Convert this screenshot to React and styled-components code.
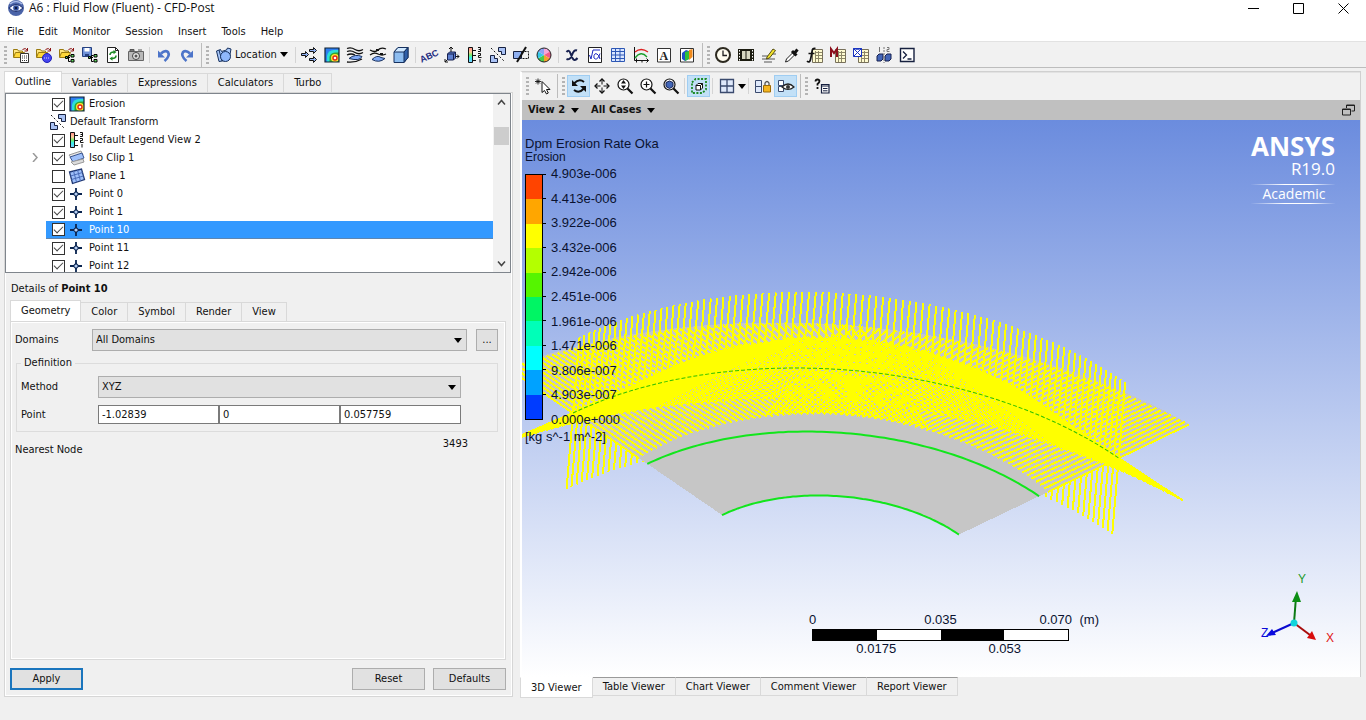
import React, { useState } from 'react';
import styled, { createGlobalStyle, css } from 'styled-components';

const GlobalStyle = createGlobalStyle`
  * {
    box-sizing: border-box;
  }
  body {
    margin: 0;
    background: #f0f0f0;
    color: #111;
    font-family: "DejaVu Sans Condensed", "Open Sans", sans-serif;
    font-size: 11px;
    line-height: 16px;
  }
  button, input, select {
    font: inherit;
    color: inherit;
  }
`;

/* ---------- icons, all on a 16 x 16 grid ---------- */

const folder = (
  <>
    <path d="M0.5 10V2.500h4l1 1.500h4v2" fill="#ffe680" stroke="#9a7b10" />
    <path d="M0.500 10.500l2-5h9l-2 5z" fill="#ffd83a" stroke="#9a7b10" />
    <path d="M9.500 2.500q3-2.500 5 1M14.500 1v3h-3" fill="none" stroke="#8d1515" />
  </>
);
const treeNodes = (
  <path d="M8 10.500h3M9.500 10.500v4h2M9.500 10.500v-2h2" fill="none" stroke="#000" />
);
const greenBoxes = (
  <path d="M6.500 9.500h2v2h-2zM12 7.500h3v2.500h-3zM12 12.500h3v2.500h-3z" fill="#5ed45e" stroke="#000" />
);
const blueBoxes = (
  <path d="M0.500 8.500v7h7v-4h-3v-3zM8.500 0.500h7v7h-4v-3h-3z" fill="#a9c2f5" stroke="#16203f" />
);
const sheet = (
  <>
    <path d="M5.500 2.500h10v13h-10z" fill="#fffbd0" stroke="#77705a" />
    <path d="M8 5.500h7M8 8.500h7M8 11.500h7M8.500 4v11M11.500 4v11" stroke="#8d8768" />
  </>
);
const lens = (
  <>
    <circle cx="6.500" cy="6.500" r="5.500" fill="#fff" stroke="#111" strokeWidth="1.200" />
    <path d="M10.500 10.500l5 5" stroke="#111" strokeWidth="2.200" />
  </>
);

const glyphs = {
  eye: (
    <>
      <circle cx="8" cy="8" r="8" fill="#4a63a8" />
      <path d="M2 4q6-5 12 0" fill="none" stroke="#a9bbe8" strokeWidth="1.500" />
      <path d="M1 8q7-7 14 0q-7 7-14 0z" fill="#f1f4ff" stroke="#1d2f6d" />
      <circle cx="8" cy="8" r="2.800" fill="#32509d" />
      <circle cx="8" cy="8" r="1.200" fill="#0b1640" />
    </>
  ),
  openResults: (
    <>
      {folder}
      <path d="M7.500 6.500h8v9h-8z" fill="#fff" stroke="#333" />
      <path d="M9 9h5M9 11h5M9 13.500h5" stroke="#333" strokeDasharray="1 1" />
    </>
  ),
  openGlobe: (
    <>
      {folder}
      <circle cx="11" cy="11" r="4.500" fill="#4545f0" stroke="#2020b8" />
      <path d="M8 11h6" stroke="#cfd6ff" strokeDasharray="1 1" />
    </>
  ),
  openState: <>{folder}{treeNodes}{greenBoxes}</>,
  saveState: (
    <>
      <path d="M0.500 0.500h9v9h-9z" fill="#6e91d8" stroke="#25407f" />
      <path d="M2.500 1h5v3.500h-5z" fill="#fff" />
      <path d="M3 7h4v2.500h-4z" fill="#25407f" />
      {treeNodes}
      {greenBoxes}
    </>
  ),
  refresh: (
    <>
      <path d="M2.500 0.500h8l3 3v12h-11z" fill="#fff" stroke="#222" />
      <path d="M10.500 0.500v3h3" fill="none" stroke="#222" />
      <path d="M5 8q0-3 4-3M11 8.500q0 3-4 3" fill="none" stroke="#1c8a24" strokeWidth="1.600" />
      <path d="M8.500 3l3 2-3 2.200zM7.500 9.500l-3 2 3 2.200z" fill="#1c8a24" />
    </>
  ),
  camera: (
    <>
      <path d="M0.500 4.500h15v9h-15z" fill="#b9b9b9" stroke="#666" />
      <path d="M2 2.500h4v2h-4zM10 3h4" fill="#777" stroke="#555" />
      <circle cx="8" cy="9" r="3.500" fill="#e9e9e9" stroke="#444" />
      <circle cx="8" cy="9" r="1.500" fill="#555" />
    </>
  ),
  undo: (
    <>
      <path d="M5 6.500q4-4 7-1.500q2.500 4-3.500 9" fill="none" stroke="#4c74c9" strokeWidth="2.600" />
      <path d="M2 3.500v7h7z" fill="#4c74c9" />
    </>
  ),
  redo: (
    <>
      <path d="M11 6.500q-4-4-7-1.500q-2.500 4 3.500 9" fill="none" stroke="#4c74c9" strokeWidth="2.600" />
      <path d="M14 3.500v7h-7z" fill="#4c74c9" />
    </>
  ),
  location: (
    <>
      <path d="M0.500 4l4-1.500 1 2 5-1.500 1-2 3.500 1-2 11-10 1.500z" fill="#a9c8fa" stroke="#17315f" />
      <path d="M3 3l3 11" stroke="#17315f" />
      <circle cx="9.500" cy="9.500" r="5" fill="#8fb7fb" stroke="#17315f" />
    </>
  ),
  vector: (
    <path
      d="M0.500 6.500h4V4.500l3 3-3 3V8.500h-4zM8.500 2.500h4V0.500l3 3-3 3V4.500h-4zM8.500 11.500h4V9.500l3 3-3 3V13.500h-4z"
      fill="#8fb0f0"
      stroke="#111"
    />
  ),
  contour: (
    <>
      <path d="M1 1h14v14h-14z" fill="#2e7ff0" />
      <path d="M3 15V9Q4 3 10 3h5v12z" fill="#2be0d8" />
      <path d="M5.500 15v-5Q6 6 11 5.500h4V15z" fill="#35a52f" />
      <circle cx="11" cy="11" r="4" fill="#ffe92e" />
      <circle cx="11" cy="11" r="2" fill="#fff" stroke="#e02718" strokeWidth="1.400" />
      <path d="M1 1h14v14h-14z" fill="none" stroke="#123" strokeWidth="1.200" />
    </>
  ),
  streamline: (
    <>
      <path d="M0 1.500q4-1.500 8 1t8 0M0 4.500q4-1.500 8 1t8 0M0 8q4-2 8 0M0 15q8 1 15-3" fill="none" stroke="#111" strokeWidth="1.300" />
      <path d="M2 11.500q6-5 13-2q-2 5-13 2z" fill="#7fa9f5" stroke="#17315f" />
    </>
  ),
  particle: (
    <>
      <path d="M0 3q5 3 8 0t8-1M0 8q4-3 8-1t8 0" fill="none" stroke="#111" strokeWidth="1.300" />
      <path d="M2 12.500q5-5 9-2l4 1q-6 5-13 1z" fill="#7fa9f5" stroke="#17315f" />
      <path d="M6 2h3v2h-3zM10 6h3v2h-3z" fill="#111" />
    </>
  ),
  volume: (
    <>
      <path d="M1 5l4-4.500h10v10l-4 5h-10z" fill="#8dbdf0" stroke="#17315f" />
      <path d="M1 5l4-4.500h10l-4 4.500z" fill="#cfe8ff" stroke="#17315f" />
      <path d="M11 5l4-4.500v10l-4 5z" fill="#2f5fa8" stroke="#17315f" />
    </>
  ),
  text: (
    <text x="-2" y="12" transform="rotate(-24 8 8)" fontFamily="Liberation Sans" fontWeight="700" fontSize="9" fill="#1c2a80">ABC</text>
  ),
  coord: (
    <>
      <path d="M7 0v9M5 2l2-2 2 2M1 15l5-5M1 12v3h3M7 9.500h8M13 7.500l2 2-2 2" fill="none" stroke="#111" />
      <path d="M3.500 7l2-2h6v6l-2 2h-6z" fill="#5d7fd0" stroke="#16204f" />
      <path d="M3.500 7h6v6M9.500 7l2-2" fill="none" stroke="#16204f" />
    </>
  ),
  legend: (
    <>
      <path d="M1.500 0.500h4v15h-4z" fill="url(#legendRamp)" stroke="#111" />
      <path d="M6 3.500h3M6 8.500h3M6 13.500h3" stroke="#111" />
      <path d="M11 0.500h2.500v4h-2.500M11.500 2.500h2M11 6.500h2.500v2h-2v2h3M13 12v3.500" fill="none" stroke="#111" />
    </>
  ),
  transform: (
    <>
      {blueBoxes}
      <path d="M1 1l14 14" stroke="#111" strokeDasharray="2 2" />
    </>
  ),
  clip: (
    <>
      <path d="M0.500 4.500h8v7h-8z" fill="#8fb0f0" stroke="#16203f" />
      <path d="M8.500 4.500h7v7h-7" fill="none" stroke="#111" strokeDasharray="2 1" />
      <path d="M13 0L4 15" stroke="#111" strokeWidth="2" />
    </>
  ),
  colorWheel: (
    <>
      <circle cx="8" cy="8" r="7" fill="#fff" />
      <path d="M8 8V1a7 7 0 0 1 6 3.500z" fill="#f5a5d8" />
      <path d="M8 8l6-3.500a7 7 0 0 1 0 7z" fill="#f25b8a" />
      <path d="M8 8l6 3.500A7 7 0 0 1 8 15z" fill="#f4a12b" />
      <path d="M8 8v7a7 7 0 0 1-6-3.500z" fill="#4bc94b" />
      <path d="M8 8l-6 3.500a7 7 0 0 1 0-7z" fill="#35c9e8" />
      <path d="M8 8L2 4.500A7 7 0 0 1 8 1z" fill="#8aa2f5" />
      <circle cx="8" cy="8" r="7" fill="none" stroke="#222" />
    </>
  ),
  variable: (
    <path d="M2.500 5q2.500-3 4 1.500t3 6t4-1.500M13 3.500q-3-1-5 4.500t-5.500 4" fill="none" stroke="#16204f" strokeWidth="2" />
  ),
  expression: (
    <>
      <path d="M1.500 0.500h13v15h-13z" fill="#fff" stroke="#222" />
      <path d="M2.500 8l1.500 4 2-9h7" fill="none" stroke="#1a26c0" />
      <path d="M13 6.500q-2 6-4.500 5.500t-1.500-3.500t3-1.500q2 1 3 5" fill="none" stroke="#1a26c0" />
    </>
  ),
  table: (
    <>
      <path d="M1.500 1.500h13v13h-13z" fill="#d9e6ff" stroke="#2c57b5" />
      <path d="M1.500 4.500h13M1.500 8h13M1.500 11.500h13M5.500 1.500v13M10 1.500v13" stroke="#2c57b5" />
    </>
  ),
  chart: (
    <>
      <path d="M1.500 0v13.500h14M3.500 15.500v-4M9 15.500v-2M13.500 11.500l2 2-2 2" fill="none" stroke="#111" />
      <path d="M2 5q6-5 13 0" fill="none" stroke="#d22" strokeWidth="1.300" />
      <path d="M2 11q6-8 12-1" fill="none" stroke="#1b9e2b" strokeWidth="1.300" />
    </>
  ),
  comment: (
    <>
      <path d="M1.500 1.500h13v13.500h-13z" fill="#fff" stroke="#333" />
      <text x="3.500" y="12.500" fontFamily="Liberation Serif" fontWeight="700" fontSize="12" fill="#222">A</text>
    </>
  ),
  figure: (
    <>
      <path d="M1.500 1.500h13v13.500h-13z" fill="#fff" stroke="#333" />
      <path d="M3 6l4-3 3 1v8l-4 2-3-2z" fill="#1e4fc8" />
      <path d="M6 5l4-1v8l-4 2z" fill="#2fbf3a" />
      <path d="M10 3l3.500-1v8l-3.500 3z" fill="#f08a1c" />
    </>
  ),
  clock: (
    <>
      <circle cx="8" cy="8" r="7" fill="#fffdf0" stroke="#2d2a20" strokeWidth="2" />
      <path d="M8 3.500V8.500h4" fill="none" stroke="#222" strokeWidth="1.300" />
    </>
  ),
  film: (
    <>
      <path d="M0 2h16v12H0z" fill="#1c1c10" />
      <path d="M4 4h8v8H4z" fill="#d8d8c0" />
      <path d="M1.500 3v11M14.500 3v11" stroke="#fff" strokeDasharray="1.500 1.500" />
      <path d="M8 4v8" stroke="#1c1c10" />
    </>
  ),
  quick: (
    <>
      <path d="M1 9h8M1 12h13M3 15h8M9 7h6" stroke="#555" />
      <path d="M6 10l6-8 2.500 1.500-6 7.500-3 1z" fill="#f2e22d" stroke="#554d10" />
    </>
  ),
  probe: (
    <>
      <path d="M1.500 15l1-3 6-6 2 2-6 6z" fill="#fff" stroke="#222" />
      <path d="M8 4l4.500 4.500M11 5.500l2.500-3" stroke="#111" strokeWidth="3" />
    </>
  ),
  functionCalc: (
    <>
      {sheet}
      <path d="M8.500 1.500q-3-1-3.500 3t-1.500 8t-3.500 1.500M1.500 6.500h6" fill="none" stroke="#111" strokeWidth="1.700" />
    </>
  ),
  macroCalc: (
    <>
      {sheet}
      <path d="M1 10V2l3 4 3-4v8" fill="none" stroke="#8b0f1c" strokeWidth="2" />
    </>
  ),
  meshCalc: (
    <>
      {sheet}
      <path d="M0.500 1.500h8v8h-8z" fill="#fff" stroke="#1a35c0" />
      <path d="M0.500 1.500l8 8M8.500 1.500l-4 4-4 4M0.500 1.500l4 1 4-1" fill="none" stroke="#1a35c0" />
    </>
  ),
  compare: (
    <>
      <path d="M3.500 0v5M11 0.500h2v2h-2v2h2.500" fill="none" stroke="#777" />
      <path d="M1 9l2-2h4v5l-2 2h-4zM9 9l2-2h4v5l-2 2h-4z" fill="#4466b8" stroke="#16204f" />
      <path d="M8 0v16" stroke="#777" strokeDasharray="2 1" />
    </>
  ),
  command: (
    <>
      <path d="M1.500 1.500h13.500v13h-13.500z" fill="#fff" stroke="#16203f" strokeWidth="1.400" />
      <path d="M4 4.500l3.500 3.500-3.500 3.500M8.500 12h4" fill="none" stroke="#16203f" strokeWidth="1.300" />
    </>
  ),
  select: (
    <>
      <path d="M7 3.500v11l2.500-2 2 3.500 1.800-1-1.800-3.500h3.500z" fill="#fff" stroke="#111" />
      <path d="M0 3.500h6M3 0.500v6M1 1.500l4 4M5 1.500l-4 4" stroke="#111" strokeWidth="0.900" />
    </>
  ),
  rotate: (
    <>
      <path d="M3 5.500q5-5.500 10-1.500M13 10.500q-5 5.500-10 1.500" fill="none" stroke="#111" strokeWidth="2" />
      <path d="M1 2v6h6zM15 14v-6h-6z" fill="#111" />
    </>
  ),
  pan: (
    <>
      <path d="M8 2v12M2 8h12" stroke="#111" strokeDasharray="4.500 3" />
      <path d="M5.500 3.500L8 1l2.500 2.500M5.500 12.500L8 15l2.500-2.500M3.500 5.500L1 8l2.500 2.500M12.500 5.500L15 8l-2.500 2.500" fill="none" stroke="#111" strokeWidth="1.300" />
    </>
  ),
  zoom: <>{lens}<path d="M6.500 2l2.500 3.500h-5zM6.500 11l2.500-3.500h-5z" fill="#111" /></>,
  zoomBox: <>{lens}<path d="M3.500 6.500h6M6.500 3.500v6" stroke="#111" strokeWidth="1.200" /></>,
  fit: <>{lens}<path d="M3 4.500l3.500-1.500 3.500 1.500v4l-3.500 2-3.500-2z" fill="#4166b8" stroke="#16204f" /></>,
  highlight: (
    <>
      <path d="M1 4.500l3.500-3.500h10.500v10.500l-3.500 3.500h-10.500z" fill="none" stroke="#1c8a24" strokeWidth="1.800" strokeDasharray="2 1.500" />
      <path d="M5 7.500l2-2h4.500v4.500l-2 2h-4.500zM5 7.500h4.500v4.500M9.500 7.500l2-2" fill="#fff" stroke="#111" />
    </>
  ),
  viewports: (
    <path d="M1.500 1.500h13v13h-13zM8 1.500v13M1.500 8h13" fill="#dfe9fb" stroke="#3a4a6e" strokeWidth="1.300" />
  ),
  lock: (
    <>
      <path d="M0.500 2.500h6v6h-6zM0.500 8.500h6v6h-6z" fill="#dfe9fb" stroke="#3a4a6e" />
      <path d="M10 8v-3q2-3 4 0v3" fill="none" stroke="#555" strokeWidth="1.300" />
      <path d="M8.500 7.500h7v6.500h-7z" fill="#f4b41e" stroke="#9a6a08" />
    </>
  ),
  syncEye: (
    <>
      <path d="M0.500 2.500h5v5h-5zM0.500 8.500h5v5h-5z" fill="#fff" stroke="#3a4a6e" />
      <path d="M4 9q6-6 12 0q-6 5-12 0z" fill="#fff" stroke="#222" strokeWidth="1.200" />
      <circle cx="10" cy="9" r="2" fill="#333" />
    </>
  ),
  help: (
    <>
      <path d="M1.500 3.500q0-2 2-2t2 1.500t-2 3v1.500M3.500 9v2" fill="none" stroke="#111" strokeWidth="1.800" />
      <path d="M7.500 6.500h7.500v8.500h-7.500z" fill="#fff" stroke="#16203f" strokeWidth="1.200" />
      <path d="M7.500 8h7.500M9 10.500h4.500M9 12.800h4.500" stroke="#16203f" />
    </>
  ),
  isoClip: (
    <>
      <path d="M0 5l12-4 2 4-11 4z" fill="#e5e5e5" stroke="#999" />
      <path d="M1 7l12-4 2 5-11 4z" fill="#9fc0fa" stroke="#3a5590" />
      <path d="M2 12l12-3 1 3-10 3z" fill="#dcdcdc" stroke="#999" />
    </>
  ),
  plane: (
    <>
      <path d="M0.500 4l12-3 3 10.500-12 4z" fill="#9fc0fa" stroke="#223a75" strokeWidth="1.300" />
      <path d="M4.500 3l3 11M8.500 2l3 11M1.500 8l12-3.500M2.500 11.500l12-3.500" stroke="#4a6cb8" />
    </>
  ),
  point: (
    <>
      <path d="M7 2v12M1 8h12" stroke="#0b2550" strokeWidth="1.800" />
      <path d="M7 4.500l3.500 3.500-3.500 3.500-3.500-3.500z" fill="#0b2550" />
      <circle cx="7" cy="8" r="1.600" fill="#b8d0f5" />
    </>
  ),
};

const IconSvg = styled.svg`
  display: block;
  flex: none;
  width: 16px;
  height: 16px;
  overflow: visible;
`;

function Icon({ name }) {
  return (
    <IconSvg viewBox="0 0 16 16" aria-hidden="true">
      {name === 'legend' && (
        <defs>
          <linearGradient id="legendRamp" x1="0" y1="0" x2="0" y2="1">
            <stop offset="0" stopColor="#f88" />
            <stop offset="0.300" stopColor="#fc9" />
            <stop offset="0.500" stopColor="#7e6" />
            <stop offset="0.700" stopColor="#3ee" />
            <stop offset="1" stopColor="#8cf" />
          </linearGradient>
        </defs>
      )}
      {glyphs[name]}
    </IconSvg>
  );
}

/* ---------- window frame ---------- */

const Window = styled.div`
  display: flex;
  flex-direction: column;
  min-height: 100vh;
`;
const TitleBar = styled.header`
  display: flex;
  align-items: center;
  height: 22px;
  padding: 0 0 6px 8px;
  background: #fff;
  font-family: "Open Sans", sans-serif;
  font-size: 12px;
`;
const TitleText = styled.span`
  flex: 1;
  padding-left: 5px;
`;
const WindowButton = styled.button`
  display: grid;
  place-items: center;
  width: 45px;
  height: 16px;
  padding: 0;
  border: 0;
  background: none;
`;
const MenuBar = styled.nav`
  display: flex;
  gap: 15px;
  height: 19px;
  padding: 2px 7px 0;
  background: #fff;
`;
const MenuLink = styled.a`
  color: inherit;
  text-decoration: none;
`;

/* ---------- toolbars ---------- */

const ToolBar = styled.div`
  display: flex;
  align-items: center;
  height: ${(p) => p.$height}px;
  background: #f1f1f1;
  border-top: 1px solid #e2e2e2;
  border-bottom: 1px solid ${(p) => (p.$flat ? '#f1f1f1' : '#bdbdbd')};
`;
const Grip = styled.span`
  width: 3px;
  height: 18px;
  margin: 0 2px 0 4px;
  background: repeating-linear-gradient(#b4b4b4 0 2px, transparent 2px 4px);
`;
const Separator = styled.span`
  width: 1px;
  height: ${(p) => (p.$tall ? 24 : 16)}px;
  margin: 0 ${(p) => (p.$tall ? 0 : 2)}px 0 ${(p) => (p.$tall ? 3 : 2)}px;
  background: ${(p) => (p.$tall ? '#bcbcbc' : '#d4d4d4')};
`;
const ToolButton = styled.button`
  display: flex;
  align-items: center;
  justify-content: center;
  gap: 3px;
  min-width: 23px;
  height: 22px;
  padding: 0 ${(p) => (p.$wide ? 4 : 0)}px;
  border: 1px solid ${(p) => (p.$on ? '#9fcdf2' : 'transparent')};
  background: ${(p) => (p.$on ? '#c2e0f7' : 'none')};
`;
const Caret = styled.span`
  width: 0;
  border: solid transparent;
  border-width: 5px 4px 0;
  border-top-color: #000;
`;

/* ---------- tabs ---------- */

const Tabs = styled.div`
  display: flex;
  align-items: flex-end;
`;
const Tab = styled.button`
  height: 19px;
  padding: 0 10px;
  border: 1px solid #d9d9d9;
  border-left-width: 0;
  border-bottom-width: 0;
  background: #f0f0f0;
  white-space: nowrap;
  ${(p) => p.$active && css`
    height: 21px;
    background: #fff;
    border-left-width: 1px;
  `}
`;
const BottomTabs = styled(Tabs)`
  align-items: flex-start;
  height: 20px;
`;
const BottomTab = styled(Tab)`
  border-width: 1px 1px 1px 0;
  border-top-color: #9a9a9a;
  ${(p) => p.$active && css`
    border-top-color: #fff;
    border-left-width: 1px;
  `}
`;

/* ---------- left side ---------- */

const Workspace = styled.main`
  flex: 1;
  display: grid;
  grid-template-columns: minmax(0, 516fr) minmax(0, 846fr);
  gap: 4px;
  padding-top: 3px;
`;
const SidePanel = styled.section`
  display: flex;
  flex-direction: column;
  padding: 0 3px 23px 4px;
`;
const PanelBody = styled.div`
  flex: 1;
  display: flex;
  flex-direction: column;
  border: 1px solid #d6d6d6;
  box-shadow: inset 0 0 0 1px #fff;
`;
const TreeBox = styled.div`
  display: flex;
  height: 180px;
  margin-right: 1px;
  background: #fff;
  border: 1px solid #7f858c;
`;
const TreeList = styled.ul`
  flex: 1;
  margin: 0;
  padding: 1px 0 0;
  list-style: none;
  overflow: hidden;
`;
const TreeRow = styled.li`
  display: flex;
  align-items: center;
  height: 18px;
  padding-left: 40px;
`;
const RowLine = styled.label`
  flex: 1;
  display: flex;
  align-items: center;
  gap: 4px;
  height: 18px;
  padding-left: ${(p) => (p.$plain ? 4 : 6)}px;
  ${(p) => p.$selected && css`
    background: #3399ff;
    color: #fff;
    border-bottom: 1px solid #5f86b0;
  `}
`;
const Expander = styled.button`
  width: 14px;
  height: 14px;
  margin-left: -18px;
  margin-right: 4px;
  padding: 0;
  border: 0;
  background: none;
  line-height: 10px;
`;
const CheckBox = styled.input`
  appearance: none;
  display: grid;
  place-items: center;
  width: 13px;
  height: 13px;
  margin: 0;
  background: #fff;
  border: 1px solid #333;
  &:checked::before {
    content: "";
    width: 8px;
    height: 4px;
    margin-top: -3px;
    border: solid #444;
    border-width: 0 0 1px 1px;
    transform: rotate(-45deg);
  }
`;
const ScrollTrack = styled.div`
  display: flex;
  flex-direction: column;
  justify-content: space-between;
  align-items: center;
  width: 17px;
  padding: 4px 0;
  background: #f1f1f1;
`;
const ScrollThumb = styled.span`
  width: 15px;
  height: 18px;
  margin-bottom: 94px;
  background: #cdcdcd;
`;
const Details = styled.div`
  flex: 1;
  display: flex;
  flex-direction: column;
  padding: 8px 6px 6px 5px;
`;
const DetailsTitle = styled.h2`
  margin: 0 0 3px 1px;
  font-size: 11px;
  font-weight: 400;
`;
const Form = styled.form`
  flex: 1;
  display: flex;
  flex-direction: column;
  padding: 7px 7px 0 4px;
  border: 1px solid #d9d9d9;
  box-shadow: inset 0 0 0 1px #fff;
`;
const Field = styled.div`
  display: grid;
  grid-template-columns: 77px minmax(0, 1fr) auto;
  align-items: center;
  margin-right: ${(p) => p.$inset || 0}px;
  margin-bottom: ${(p) => p.$after || 0}px;
`;
const SelectWrap = styled.span`
  display: grid;
  align-items: center;
  > * {
    grid-area: 1 / 1;
  }
  > span {
    justify-self: end;
    margin-right: 5px;
    pointer-events: none;
  }
`;
const Select = styled.select`
  appearance: none;
  width: 100%;
  height: 22px;
  padding: 0 3px;
  border: 1px solid #adadad;
  border-radius: 0;
  background: #e1e1e1;
`;
const Group = styled.fieldset`
  min-width: 0;
  margin: 4px 0 10px 1px;
  padding: 5px 4px 7px 4px;
  border: 1px solid #dcdcdc;
  legend {
    padding: 0 3px;
  }
`;
const Coordinates = styled.div`
  display: grid;
  grid-template-columns: repeat(3, minmax(0, 1fr));
`;
const NumberInput = styled.input`
  min-width: 0;
  height: 19px;
  padding: 0 3px;
  border: 1px solid #7a7a7a;
  background: #fff;
`;
const NodeRow = styled.div`
  display: flex;
  justify-content: space-between;
  padding-right: 30px;
  output {
    margin-top: -6px;
  }
`;
const Actions = styled.div`
  display: flex;
  gap: 8px;
  padding-top: 8px;
  > :first-child {
    margin-right: auto;
  }
`;
const PushButton = styled.button`
  width: ${(p) => (p.$small ? 22 : 73)}px;
  height: 22px;
  margin-left: ${(p) => (p.$small ? 9 : 0)}px;
  padding: 0;
  border: ${(p) => (p.$primary ? '2px solid #1a75bd' : '1px solid #adadad')};
  background: #e1e1e1;
`;

/* ---------- viewer ---------- */

const Viewer = styled.section`
  display: flex;
  flex-direction: column;
  padding: 0 5px 23px 0;
`;
const ViewFrame = styled.div`
  flex: 1;
  display: flex;
  flex-direction: column;
  border: 1px solid #d0d0d0;
  border-bottom: 0;
  border-left: 2px solid #fff;
`;
const ViewHeader = styled.div`
  display: flex;
  align-items: center;
  gap: 12px;
  height: 20px;
  padding: 0 5px 0 6px;
  background: #c0c0c0;
  font-weight: 700;
`;
const ViewMenu = styled.button`
  display: flex;
  align-items: center;
  gap: 6px;
  padding: 0;
  border: 0;
  background: none;
  font-weight: 700;
`;
const Restore = styled.button`
  display: flex;
  margin-left: auto;
  padding: 0;
  border: 0;
  background: none;
`;
const Viewport = styled.div`
  position: relative;
  flex: 1;
  min-height: 500px;
  padding: 16px 0 0 3px;
  overflow: hidden;
  background: linear-gradient(#6b8cde, #fff);
  color: #0a1230;
  font-family: "Liberation Sans", Arial, sans-serif;
  font-size: 13px;
`;
const SceneSvg = styled.svg`
  position: absolute;
  inset: 0;
  width: 100%;
  height: 100%;
`;
const Legend = styled.div`
  position: relative;
  line-height: 16px;
`;
const LegendTitle = styled.div`
  line-height: ${(p) => p.$height}px;
  font-size: ${(p) => p.$size}px;
`;
const LegendBody = styled.div`
  display: flex;
  gap: 8px;
  height: 262px;
  margin-top: 3px;
`;
const Ramp = styled.div`
  display: flex;
  flex-direction: column;
  width: 18px;
  margin: 8px 0;
  border: 1px solid #000;
`;
const Swatch = styled.span`
  flex: 1;
  position: relative;
  background: ${(p) => p.$color};
  &::after {
    content: "";
    position: absolute;
    top: -1px;
    right: -4px;
    width: 4px;
    height: 1px;
    background: #000;
  }
`;
const RampLabels = styled.div`
  display: flex;
  flex-direction: column;
  justify-content: space-between;
`;
const Brand = styled.div`
  position: absolute;
  top: 9px;
  right: 25px;
  display: flex;
  flex-direction: column;
  align-items: flex-end;
  color: #fff;
  font-family: "Open Sans", sans-serif;
`;
const BrandName = styled.span`
  font-size: 26px;
  font-weight: 700;
  line-height: 34px;
`;
const BrandVersion = styled.span`
  font-size: 17px;
  line-height: 12px;
`;
const BrandEdition = styled.span`
  width: 84px;
  margin-top: 9px;
  padding-left: 2px;
  font-size: 14px;
  line-height: 18px;
  text-align: center;
  border: solid;
  border-width: 1px 0;
  border-image: linear-gradient(90deg, transparent, #fff 40%, #fff 70%, transparent) 1;
`;
const Ruler = styled.div`
  position: absolute;
  left: 50%;
  bottom: 20px;
  width: 257px;
  margin-left: -129px;
`;
const RulerTop = styled.div`
  display: grid;
  grid-template-columns: 1fr auto 1fr;
  margin: 0 -3px 1px;
  > :last-child {
    text-align: right;
  }
`;
const RulerUnit = styled.span`
  position: absolute;
  top: 0;
  right: -30px;
`;
const RulerBar = styled.div`
  display: grid;
  grid-template-columns: repeat(4, 1fr);
  height: 12px;
  border: 1px solid #000;
  > :nth-child(odd) {
    background: #000;
  }
  > :nth-child(even) {
    background: #fff;
  }
`;
const RulerBottom = styled.div`
  display: flex;
  > * {
    flex: 1;
    text-align: center;
  }
`;
const Triad = styled.svg`
  position: absolute;
  right: 18px;
  bottom: 28px;
  width: 86px;
  height: 80px;
`;

/* ---------- scene geometry ---------- */

const CENTER = [314, 473];
const HALF = Math.PI / 4;
const LINES = 90;
const UP = [6.5, -76];

// point on the projected bend at angle s, scaled about its centre
const bend = (s, k = 1) => [
  CENTER[0] + k * (13.4 * Math.cos(s) + 385.4 * Math.sin(s)),
  CENTER[1] + k * (-222.7 * Math.cos(s) + 31.8 * Math.sin(s)),
];
const angles = Array.from({ length: LINES + 1 }, (_, i) => -HALF + (2 * HALF * i) / LINES);
const reach = (s) => 0.2 + 0.05 * (s / HALF) ** 2;
const fmt = ([x, y]) => `${x.toFixed(1)} ${y.toFixed(1)}`;
const polyline = (points) => 'M' + points.map(fmt).join('L');
const shift = ([x, y], [dx, dy], n) => [x + dx * n, y + dy * n];

// in-plane lines lean outwards on either side; the two fans cross in the middle
const fan = (side) =>
  angles
    .filter((s) => s * side > -0.14)
    .map((s) => {
      const lean = side * 0.13 * (1 - (s / HALF) ** 2);
      return [bend(s - lean, 1 - reach(s)), bend(s + lean, 1 + reach(s))];
    });
const spokes = [...fan(-1), ...fan(1)];

const lowerVerticals = angles.map((s) => polyline([bend(s), shift(bend(s), UP, -1)])).join('');
const upperVerticals = angles.map((s) => polyline([bend(s), shift(bend(s), UP, 1)])).join('');
const radials = spokes.map(polyline).join('');
const tilted = spokes.map(([a, b]) => polyline([shift(a, UP, 1), shift(b, UP, -1)])).join('');
const arc = (k) => polyline(angles.map((s) => bend(s, k)));
const sheetShape =
  polyline([
    ...angles.map((s) => bend(s, 1 + reach(s))),
    ...[...angles].reverse().map((s) => bend(s, 0.435)),
  ]) + 'Z';

function Scene() {
  return (
    <SceneSvg viewBox="0 0 837 557" preserveAspectRatio="xMidYMid slice" role="img" aria-label="Erosion result">
      <g fill="none" stroke="#ffff00" strokeWidth="2" shapeRendering="crispEdges">
        <path d={lowerVerticals} />
        <path d={sheetShape} fill="#c6c6c6" stroke="none" />
        <path d={radials} />
        <path d={upperVerticals} />
        <path d={tilted} />
      </g>
      <g fill="none" stroke="#12e61c" strokeWidth="2">
        <path d={arc(1)} stroke="#30c000" strokeWidth="1" strokeDasharray="4 2" />
        <path d={arc(0.718)} />
        <path d={arc(0.434)} />
      </g>
    </SceneSvg>
  );
}

/* ---------- data ---------- */

const menus = ['File', 'Edit', 'Monitor', 'Session', 'Insert', 'Tools', 'Help'];
const fileTools = ['openResults', 'openGlobe', 'openState', 'saveState', 'refresh', 'camera', '|', 'undo', 'redo'];
const insertTools = [
  '|', 'vector', 'contour', 'streamline', 'particle', 'volume',
  '|', 'text', 'coord', 'legend', 'transform', 'clip', 'colorWheel',
  '|', 'variable', 'expression', 'table', 'chart', 'comment', 'figure',
];
const calcTools = ['clock', 'film', 'quick', 'probe', 'functionCalc', 'macroCalc', 'meshCalc', 'compare', 'command'];
const sideTabs = ['Outline', 'Variables', 'Expressions', 'Calculators', 'Turbo'];
const detailTabs = ['Geometry', 'Color', 'Symbol', 'Render', 'View'];
const viewerTabs = ['3D Viewer', 'Table Viewer', 'Chart Viewer', 'Comment Viewer', 'Report Viewer'];
const tree = [
  { label: 'Erosion', icon: 'contour', checked: true },
  { label: 'Default Transform', icon: 'transform', plain: true },
  { label: 'Default Legend View 2', icon: 'legend', checked: true },
  { label: 'Iso Clip 1', icon: 'isoClip', checked: true, expandable: true },
  { label: 'Plane 1', icon: 'plane', checked: false },
  { label: 'Point 0', icon: 'point', checked: true },
  { label: 'Point 1', icon: 'point', checked: true },
  { label: 'Point 10', icon: 'point', checked: true, selected: true },
  { label: 'Point 11', icon: 'point', checked: true },
  { label: 'Point 12', icon: 'point', checked: true },
];
const rampColors = ['#ff4400', '#ffa600', '#ffff00', '#b4ff00', '#55f500', '#00f564', '#00ffb8', '#00ffff', '#00a2ff', '#003cff'];
const rampValues = [
  '4.903e-006', '4.413e-006', '3.922e-006', '3.432e-006', '2.942e-006', '2.451e-006',
  '1.961e-006', '1.471e-006', '9.806e-007', '4.903e-007', '0.000e+000',
];

function Tools({ names, on = [] }) {
  return names.map((name, i) =>
    name === '|' ? (
      <Separator key={i} />
    ) : (
      <ToolButton key={i} type="button" aria-label={name} $on={on.includes(name)}>
        <Icon name={name} />
      </ToolButton>
    )
  );
}

function TabStrip({ items, Strip = Tabs, Item = Tab }) {
  const [active, setActive] = useState(items[0]);
  return (
    <Strip role="tablist">
      {items.map((item) => (
        <Item key={item} type="button" role="tab" aria-selected={item === active} $active={item === active} onClick={() => setActive(item)}>
          {item}
        </Item>
      ))}
    </Strip>
  );
}

function Chevron({ d, color = '#444' }) {
  return (
    <svg width="9" height="9" viewBox="0 0 9 9" aria-hidden="true">
      <path d={d} fill="none" stroke={color} strokeWidth="1.500" />
    </svg>
  );
}

function Outline() {
  return (
    <TreeBox>
      <TreeList>
        {tree.map((row) => (
          <TreeRow key={row.label}>
            {row.expandable && (
              <Expander type="button" aria-label="Expand">
                <Chevron d="M2 0l4 4.500-4 4.500" color="#999" />
              </Expander>
            )}
            <RowLine $plain={row.plain} $selected={row.selected}>
              {!row.plain && <CheckBox type="checkbox" defaultChecked={row.checked} />}
              <Icon name={row.icon} />
              <span>{row.label}</span>
            </RowLine>
          </TreeRow>
        ))}
      </TreeList>
      <ScrollTrack>
        <Chevron d="M1 6.500l3.500-4 3.500 4" />
        <ScrollThumb />
        <Chevron d="M1 2.500l3.500 4 3.500-4" />
      </ScrollTrack>
    </TreeBox>
  );
}

function DetailsPane() {
  return (
    <Details>
      <DetailsTitle>Details of <b>Point 10</b></DetailsTitle>
      <TabStrip items={detailTabs} />
      <Form onSubmit={(e) => e.preventDefault()}>
        <Field>
          <label htmlFor="domains">Domains</label>
          <SelectWrap>
            <Select id="domains"><option>All Domains</option></Select>
            <Caret />
          </SelectWrap>
          <PushButton type="button" $small>...</PushButton>
        </Field>
        <Group>
          <legend>Definition</legend>
          <Field $after={7} $inset={32}>
            <label htmlFor="method">Method</label>
            <SelectWrap>
              <Select id="method"><option>XYZ</option></Select>
              <Caret />
            </SelectWrap>
          </Field>
          <Field $inset={32}>
            <label htmlFor="px">Point</label>
            <Coordinates>
              <NumberInput id="px" defaultValue="-1.02839" />
              <NumberInput aria-label="Point y" defaultValue="0" />
              <NumberInput aria-label="Point z" defaultValue="0.057759" />
            </Coordinates>
          </Field>
        </Group>
        <NodeRow>
          <label htmlFor="node">Nearest Node</label>
          <output id="node">3493</output>
        </NodeRow>
      </Form>
      <Actions>
        <PushButton type="button" $primary>Apply</PushButton>
        <PushButton type="button">Reset</PushButton>
        <PushButton type="button">Defaults</PushButton>
      </Actions>
    </Details>
  );
}

function ViewerPane() {
  return (
    <Viewer>
      <ViewFrame>
        <ToolBar $height={28} $flat>
          <Grip />
          <Tools names={['select']} />
          <Separator $tall />
          <Grip />
          <Tools names={['rotate', 'pan', 'zoom', 'zoomBox', 'fit', '|', 'highlight', '|', 'viewports']} on={['rotate', 'highlight']} />
          <Caret />
          <Tools names={['|', 'lock', 'syncEye']} on={['syncEye']} />
          <Separator $tall />
          <Grip />
          <Tools names={['help']} />
        </ToolBar>
        <ViewHeader>
          <ViewMenu type="button">View 2 <Caret /></ViewMenu>
          <ViewMenu type="button">All Cases <Caret /></ViewMenu>
          <Restore type="button" aria-label="Restore">
            <svg width="13" height="12" viewBox="0 0 13 12">
              <path d="M4.500 4V1h8v6h-3M0.500 5h8v6h-8zM4.500 1.500h8M0.500 5.500h8" fill="none" stroke="#222" />
            </svg>
          </Restore>
        </ViewHeader>
        <Viewport>
          <Scene />
          <Legend>
            <LegendTitle $height={15} $size={13}>Dpm Erosion Rate Oka</LegendTitle>
            <LegendTitle $height={12} $size={12}>Erosion</LegendTitle>
            <LegendBody>
              <Ramp>
                {rampColors.map((c) => <Swatch key={c} $color={c} />)}
              </Ramp>
              <RampLabels>
                {rampValues.map((v) => <span key={v}>{v}</span>)}
              </RampLabels>
            </LegendBody>
            <LegendTitle $height={18} $size={13}>[kg s^-1 m^-2]</LegendTitle>
          </Legend>
          <Brand>
            <BrandName>ANSYS</BrandName>
            <BrandVersion>R19.0</BrandVersion>
            <BrandEdition>Academic</BrandEdition>
          </Brand>
          <Ruler>
            <RulerTop>
              <span>0</span>
              <span>0.035</span>
              <span>0.070</span>
            </RulerTop>
            <RulerUnit>(m)</RulerUnit>
            <RulerBar><i /><i /><i /><i /></RulerBar>
            <RulerBottom>
              <span>0.0175</span>
              <span>0.053</span>
            </RulerBottom>
          </Ruler>
          <Triad viewBox="0 0 86 80" fontFamily="Liberation Sans" fontSize="12">
            <path d="M38 54L40 28" stroke="#0c7a14" strokeWidth="2" />
            <path d="M36 33L41 22L45 33Z" fill="#0c8f14" />
            <path d="M38 54L16 64" stroke="#0a0ad0" strokeWidth="2" />
            <path d="M10 67L16 60L20 66Z" fill="#0a0ae0" />
            <path d="M38 54L54 66" stroke="#a80c0c" strokeWidth="2" />
            <path d="M60 71L51 69L56 62Z" fill="#d80c0c" />
            <circle cx="38" cy="54" r="3.500" fill="#12d4dc" />
            <text x="42" y="14" fill="#1c9a28">Y</text>
            <text x="5" y="68" fill="#0a0ad8">Z</text>
            <text x="70" y="73" fill="#e01616">X</text>
          </Triad>
        </Viewport>
      </ViewFrame>
      <TabStrip items={viewerTabs} Strip={BottomTabs} Item={BottomTab} />
    </Viewer>
  );
}

export default function App() {
  return (
    <Window>
      <GlobalStyle />
      <TitleBar>
        <Icon name="eye" />
        <TitleText>A6 : Fluid Flow (Fluent) - CFD-Post</TitleText>
        <WindowButton type="button" aria-label="Minimize">
          <svg width="11" height="11"><path d="M0 5.500h11" stroke="#000" /></svg>
        </WindowButton>
        <WindowButton type="button" aria-label="Maximize">
          <svg width="11" height="11"><path d="M0.500 0.500h10v10h-10z" fill="none" stroke="#000" /></svg>
        </WindowButton>
        <WindowButton type="button" aria-label="Close">
          <svg width="11" height="11"><path d="M0.500 0.500l10 10M10.500 0.500l-10 10" stroke="#000" /></svg>
        </WindowButton>
      </TitleBar>
      <MenuBar>
        {menus.map((m) => <MenuLink key={m} href="#">{m}</MenuLink>)}
      </MenuBar>
      <ToolBar $height={27}>
        <Grip />
        <Tools names={fileTools} />
        <Separator $tall />
        <Grip />
        <ToolButton type="button" $wide>
          <Icon name="location" />
          Location
          <Caret />
        </ToolButton>
        <Tools names={insertTools} />
        <Separator $tall />
        <Grip />
        <Tools names={calcTools} />
      </ToolBar>
      <Workspace>
        <SidePanel>
          <TabStrip items={sideTabs} />
          <PanelBody>
            <Outline />
            <DetailsPane />
          </PanelBody>
        </SidePanel>
        <ViewerPane />
      </Workspace>
    </Window>
  );
}
